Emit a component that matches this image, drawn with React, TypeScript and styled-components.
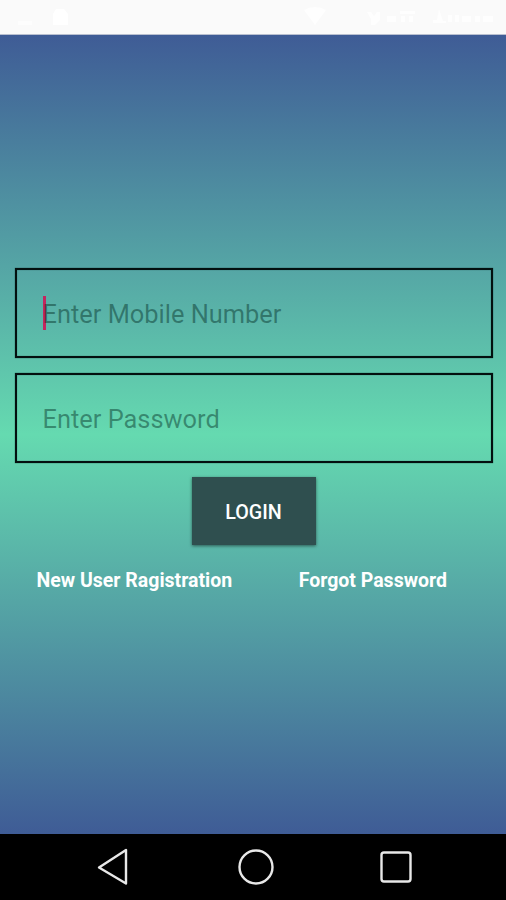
import React from "react";
import styled, { createGlobalStyle } from "styled-components";

const GlobalStyle = createGlobalStyle`
  * { box-sizing: border-box; }
  body { margin: 0; font-family: Roboto, sans-serif; }
`;

const Screen = styled.div`
  display: flex;
  flex-direction: column;
  width: 506px;
  height: 900px;
  overflow: hidden;
`;

const StatusBar = styled.header`
  display: flex;
  align-items: center;
  height: 35px;
  padding: 0 11px 0 17px;
  gap: 17px;
  background: #fafafa;
  border-bottom: 1px solid #b9c0d0;
`;

const Spacer = styled.div`
  flex: 1;
`;

const Content = styled.main`
  display: flex;
  flex-direction: column;
  align-items: center;
  height: 799px;
  padding: 232px 13px 0 14px;
  background: linear-gradient(#3f5c96, #65dab0 50%, #3f5c96);
`;

const Field = styled.label`
  display: flex;
  align-items: center;
  width: 478px;
  height: 90px;
  margin: 0.5px 0 14.5px;
  padding: 2px 26px 0;
  border: 2px solid #03100f;
  box-shadow: 0 0 1px rgba(0, 20, 20, 0.7), inset 0 0 1px rgba(0, 20, 20, 0.7);
`;

const Caret = styled.span`
  width: 3px;
  height: 34px;
  margin: -2px -3px 0 0;
  background: #c2265f;
`;

const Placeholder = styled.span`
  color: rgba(0, 40, 30, 0.44);
  font-size: 25.4px;
  line-height: 30px;
  white-space: nowrap;
`;

const LoginButton = styled.button`
  width: 124px;
  height: 68px;
  padding: 2px 0 0;
  border: 0;
  background: #2f4f4f;
  box-shadow: 0 1px 3px rgba(0, 0, 0, 0.5);
  color: #fff;
  font: 500 19.7px Roboto, sans-serif;
`;

const Links = styled.nav`
  display: flex;
  align-self: stretch;
  gap: 66.5px;
  padding: 24px 0 0 22.5px;
`;

const TextLink = styled.a`
  color: #fff;
  font-size: 19.5px;
  font-weight: 700;
  line-height: 24px;
  white-space: nowrap;
`;

const NavBar = styled.footer`
  display: flex;
  height: 66px;
  background: #000;
`;

export default function App() {
  return (
    <Screen>
      <GlobalStyle />
      <StatusBar>
        <svg width="16" height="18" fill="#fdfdfd"><path d="M1 13h14v4H1z" /></svg>
        <svg width="20" height="18" fill="#fff"><path d="M6 1h8l4 5v11H3V6z" /></svg>
        <Spacer />
        <svg width="192" height="20" fill="#fefefe">
          <path d="M1 3Q12-3 23 3L12 18z" />
          <path d="M64 5h4l3 4 3-4h3v8l-5 5h-4v-6z" />
          <path d="M84 9h9v6h-9zM97 4h15v3H97zM98 9h4v6h-4zM106 9h4v6h-4z" />
          <path d="M136 2l4 12h3v2h-13v-3h4zM145 8h4v7h-4zM152 8h4v7h-4zM159 9h9v6h-9zM172 9h5v6h-5zM180 9h10v6h-10z" />
        </svg>
      </StatusBar>
      <Content>
        <Field><Caret /><Placeholder>Enter Mobile Number</Placeholder></Field>
        <Field><Placeholder>Enter Password</Placeholder></Field>
        <LoginButton>LOGIN</LoginButton>
        <Links>
          <TextLink>New User Ragistration</TextLink>
          <TextLink>Forgot Password</TextLink>
        </Links>
      </Content>
      <NavBar>
        <svg width="506" height="66" fill="none" stroke="#e8e8e8" strokeWidth="2.4" strokeLinejoin="round">
          <path d="M99 33.5L126 16V49.5Z" />
          <circle cx="256" cy="33" r="16.5" />
          <rect x="381.5" y="18.5" width="29" height="29" rx="2.5" />
        </svg>
      </NavBar>
    </Screen>
  );
}
